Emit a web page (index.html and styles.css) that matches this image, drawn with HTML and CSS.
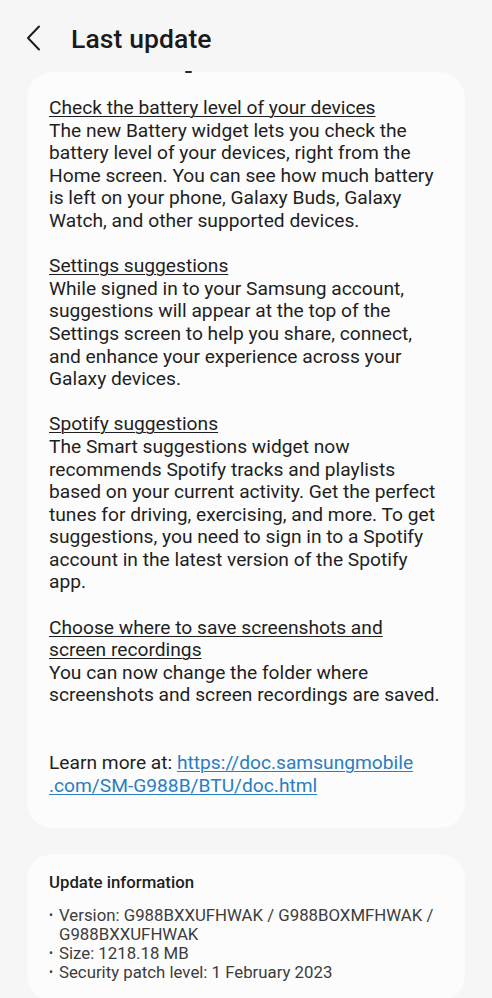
FILE: index.html
```html
<!DOCTYPE html>
<html lang="en">
<head>
    <meta charset="UTF-8">
    <meta name="viewport" content="width=device-width, initial-scale=1.0">
    <title>Last update</title>
    <link rel="stylesheet" href="styles.css">
</head>
<body>
<div class="top-bar">
    <svg class="back-icon" width="16" height="26" viewBox="0 0 16 26">
        <path d="M13 1.5 L2 13 L13 24.5" fill="none" stroke="#1e1e1e" stroke-width="2" stroke-linecap="round" stroke-linejoin="round"/>
    </svg>
    <h1>Last update</h1>
</div>

<div class="card notes">
    <span class="cut-off"></span>
    <p>
        <span class="topic">Check the battery level of your devices</span><br>
        The new Battery widget lets you check the battery level of your devices, right from the Home screen. You can see how much battery is left on your phone, Galaxy Buds, Galaxy Watch, and other supported devices.
    </p>
    <p>
        <span class="topic">Settings suggestions</span><br>
        While signed in to your Samsung account, suggestions will appear at the top of the Settings screen to help you share, connect, and enhance your experience across your Galaxy devices.
    </p>
    <p>
        <span class="topic">Spotify suggestions</span><br>
        The Smart suggestions widget now recommends Spotify tracks and playlists based on your current activity. Get the perfect tunes for driving, exercising, and more. To get suggestions, you need to sign in to a Spotify account in the latest version of the Spotify app.
    </p>
    <p>
        <span class="topic">Choose where to save screenshots and<br>screen recordings</span><br>
        You can now change the folder where screenshots and screen recordings are saved.
    </p>
    <p class="learn-more">
        Learn more at: <a href="#">https://doc.samsungmobile<br>.com/SM-G988B/BTU/doc.html</a>
    </p>
</div>

<div class="card info">
    <h2>Update information</h2>
    <ul>
        <li>Version: G988BXXUFHWAK / G988BOXMFHWAK / G988BXXUFHWAK</li>
        <li>Size: 1218.18 MB</li>
        <li>Security patch level: 1 February 2023</li>
    </ul>
</div>
</body>
</html>
```

FILE: styles.css
```css
body {
    margin: 0;
    background-color: #f6f6f6;
    font-family: Roboto, "Liberation Sans", sans-serif;
    color: #1f1f1f;
}
/* Header with back arrow */
.top-bar {
    display: flex;
    align-items: center;
    height: 72px;
    padding-left: 26px;
    padding-top: 4px;
    box-sizing: border-box;
}
.back-icon {
    margin-right: 29px;
}
.top-bar h1 {
    margin: 0;
    font-size: 26.5px;
    font-weight: 500;
    color: #1a1a1a;
    letter-spacing: 0.1px;
}
/* Rounded cards */
.card {
    background-color: #fcfcfc;
    border-radius: 26px;
    margin: 0 27px;
}
.notes {
    position: relative;
    padding: 25px 22px 31px 22px;
    font-size: 19.2px;
    line-height: 22.6px;
}
.notes p {
    margin: 0 0 22.6px 0;
}
.notes p:last-child {
    margin-bottom: 0;
}
.notes .learn-more {
    margin-top: 45.2px;
}
.topic {
    text-decoration: underline;
    text-underline-offset: 2px;
    text-decoration-thickness: 1px;
}
.learn-more a {
    color: #2b7ec1;
    text-decoration-thickness: 1px;
    text-underline-offset: 2px;
}
/* Descender of the line scrolled out of view */
.cut-off {
    position: absolute;
    top: -1px;
    left: 158px;
    width: 7px;
    height: 2px;
    border-radius: 1px;
    background-color: #2a2a2a;
}
.info {
    margin-top: 26px;
    padding: 18px 22px 20px 22px;
}
.info h2 {
    margin: 0 0 14px 0;
    font-size: 16.8px;
    line-height: 20px;
    font-weight: 500;
    color: #1f1f1f;
}
.info ul {
    margin: 0;
    padding: 0;
    list-style: none;
    font-size: 16.8px;
    line-height: 18.7px;
    color: #3c3c3c;
}
.info li {
    position: relative;
    padding-left: 10px;
}
.info li::before {
    content: "\2022";
    position: absolute;
    left: 0;
    font-size: 12px;
}
```
